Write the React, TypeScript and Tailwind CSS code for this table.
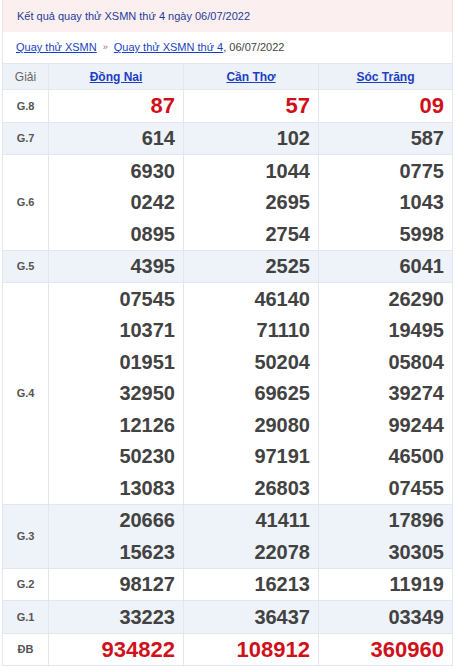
const PROVINCES = ['Đồng Nai', 'Cần Thơ', 'Sóc Trăng'];

const PRIZES: { label: string; cols: string[][]; red?: boolean; big?: boolean }[] = [
  { label: 'G.8', cols: [['87'], ['57'], ['09']], red: true, big: true },
  { label: 'G.7', cols: [['614'], ['102'], ['587']] },
  {
    label: 'G.6',
    cols: [
      ['6930', '0242', '0895'],
      ['1044', '2695', '2754'],
      ['0775', '1043', '5998'],
    ],
  },
  { label: 'G.5', cols: [['4395'], ['2525'], ['6041']] },
  {
    label: 'G.4',
    cols: [
      ['07545', '10371', '01951', '32950', '12126', '50230', '13083'],
      ['46140', '71110', '50204', '69625', '29080', '97191', '26803'],
      ['26290', '19495', '05804', '39274', '99244', '46500', '07455'],
    ],
  },
  {
    label: 'G.3',
    cols: [
      ['20666', '15623'],
      ['41411', '22078'],
      ['17896', '30305'],
    ],
  },
  { label: 'G.2', cols: [['98127'], ['16213'], ['11919']] },
  { label: 'G.1', cols: [['33223'], ['36437'], ['03349']] },
  { label: 'ĐB', cols: [['934822'], ['108912'], ['360960']], red: true, big: true },
];

const WIDTHS = ['w-[135px]', 'w-[135px]', 'w-[133px]'];

export default function App() {
  return (
    <div className="bg-white w-[456px] h-[666px] overflow-hidden font-['Liberation_Sans',Arial,sans-serif]">
      <div className="ml-[2px] w-[451px] border-x border-[#e3e6ec]">
        {/* title strip */}
        <div className="h-[32px] bg-[#fcefef] flex items-center pl-[14px] text-[11px] text-[#1c3d9c]">
          Kết quả quay thử XSMN thứ 4 ngày 06/07/2022
        </div>

        {/* breadcrumb */}
        <div className="h-[31px] flex items-center pl-[13px] text-[11px] text-[#444]">
          <a className="text-[#1a3fc4] underline">Quay thử XSMN</a>
          <span className="mx-[6px] text-[9px] text-[#777]">»</span>
          <a className="text-[#1a3fc4] underline">Quay thử XSMN thứ 4</a>
          <span>, 06/07/2022</span>
        </div>

        {/* header row */}
        <div className="flex h-[27px] bg-[#edf1f8] border-y border-[#e3e6ec] text-[12px]">
          <div className="w-[46px] flex items-center justify-center text-[#666] border-r border-[#e3e6ec]">
            Giải
          </div>
          {PROVINCES.map((p, i) => (
            <div
              key={p}
              className={`${WIDTHS[i]} flex items-center justify-center font-bold ${i < 2 ? 'border-r border-[#e3e6ec]' : ''}`}
            >
              <a className="text-[#1a3fc4] underline">{p}</a>
            </div>
          ))}
        </div>

        {/* prize rows */}
        {PRIZES.map((row, r) => (
          <div
            key={row.label}
            className={`flex border-b border-[#e3e6ec] ${r % 2 === 1 ? 'bg-[#eef2f9]' : 'bg-white'}`}
          >
            <div className="w-[46px] flex items-center justify-center text-[11px] font-bold text-[#555] border-r border-[#e3e6ec]">
              {row.label}
            </div>
            {row.cols.map((nums, i) => (
              <div
                key={i}
                className={`${WIDTHS[i]} flex flex-col ${i < 2 ? 'border-r border-[#e3e6ec]' : ''}`}
              >
                {nums.map((n, k) => (
                  <div
                    key={k}
                    className={`h-[31.5px] flex items-center justify-end pr-[8px] font-bold ${
                      row.big ? 'text-[22px]' : 'text-[20px]'
                    } ${row.red ? 'text-[#d0101a]' : 'text-[#424242]'}`}
                  >
                    {n}
                  </div>
                ))}
              </div>
            ))}
          </div>
        ))}
      </div>
    </div>
  );
}
